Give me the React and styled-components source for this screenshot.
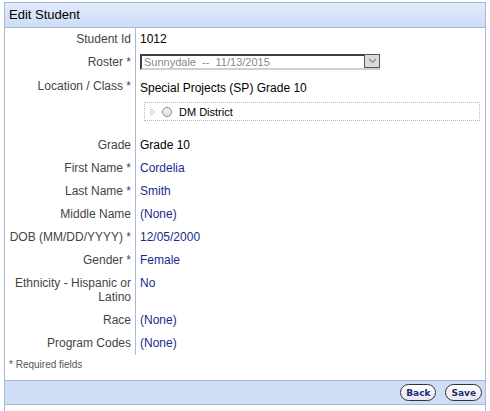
import React from "react";
import styled, { createGlobalStyle } from "styled-components";

const GlobalStyle = createGlobalStyle`
  html, body {
    margin: 0;
    padding: 0;
    background: #fff;
  }
  body {
    font-family: Arial, "Liberation Sans", sans-serif;
    font-size: 12px;
  }
`;

const fields = [
  { label: "Grade", value: "Grade 10", plain: true },
  { label: "First Name *", value: "Cordelia" },
  { label: "Last Name *", value: "Smith" },
  { label: "Middle Name", value: "(None)" },
  { label: "DOB (MM/DD/YYYY) *", value: "12/05/2000" },
  { label: "Gender *", value: "Female" },
  { label: "Ethnicity - Hispanic or Latino", value: "No" },
  { label: "Race", value: "(None)" },
  { label: "Program Codes", value: "(None)" },
];

export default function App() {
  return (
    <>
      <GlobalStyle />
      <Panel>
        <Header>Edit Student</Header>
        <Body>
          <Form>
            <Label>Student Id</Label>
            <Value plain>1012</Value>

            <Label>Roster *</Label>
            <Value>
              <Select>
                <SelectText>Sunnydale &nbsp;-- &nbsp;11/13/2015</SelectText>
                <SelectArrow>
                  <svg width="9" height="6" viewBox="0 0 9 6">
                    <path d="M1 1 L4.5 4.5 L8 1" fill="none" stroke="#8a8a8a" strokeWidth="1.2" />
                  </svg>
                </SelectArrow>
              </Select>
            </Value>

            <Label>Location / Class *</Label>
            <Value plain>
              <ClassName>Special Projects (SP) Grade 10</ClassName>
              <TreeBox>
                <svg width="6" height="8" viewBox="0 0 6 8">
                  <path d="M1 1 L5 4 L1 7 Z" fill="none" stroke="#c8c8c8" strokeWidth="1" />
                </svg>
                <Radio />
                <TreeText>DM District</TreeText>
              </TreeBox>
            </Value>

            {fields.map((f) => (
              <React.Fragment key={f.label}>
                <Label>{f.label}</Label>
                <Value plain={f.plain}>{f.value}</Value>
              </React.Fragment>
            ))}
          </Form>
          <Required>* Required fields</Required>
        </Body>
        <Footer>
          <PillButton>Back</PillButton>
          <PillButton>Save</PillButton>
        </Footer>
        <Spacer />
      </Panel>
    </>
  );
}

const Panel = styled.div`
  margin: 2px 4px 0;
  border: 1px solid #a9b8d6;
  border-bottom: none;
`;

const Header = styled.div`
  height: 24px;
  line-height: 24px;
  padding-left: 4px;
  font-size: 13px;
  color: #000;
  background: linear-gradient(#e2ebfb, #cedcf6);
  border-bottom: 1px solid #a9b8d6;
`;

const Body = styled.div`
  background: #fff;
`;

const Form = styled.div`
  display: grid;
  grid-template-columns: 131px 1fr;
`;

const Label = styled.div`
  padding: 4px 4px 5px 0;
  line-height: 14px;
  text-align: right;
  color: #444;
  border-right: 1px solid #a9b8d6;
`;

const Value = styled.div`
  padding: 4px 4px 5px 4px;
  line-height: 14px;
  color: ${(p) => (p.plain ? "#000" : "#1a2a8c")};
`;

const Select = styled.div`
  display: flex;
  align-items: stretch;
  width: 240px;
  height: 16px;
  margin-top: -1px;
  box-sizing: border-box;
  border-top: 2px solid #404040;
  border-left: 2px solid #404040;
  border-right: 1px solid #d4d0c8;
  border-bottom: 2px solid #d4d0c8;
  background: #fff;
`;

const SelectText = styled.div`
  flex: 1;
  padding-left: 2px;
  font-size: 11px;
  line-height: 12px;
  color: #8a8a8a;
  white-space: nowrap;
`;

const SelectArrow = styled.div`
  width: 14px;
  display: flex;
  align-items: center;
  justify-content: center;
  background: #dcdad4;
  border: 1px solid #555;
  margin-top: -2px;
  margin-right: -1px;
`;

const ClassName = styled.div`
  padding-top: 2px;
`;

const TreeBox = styled.div`
  display: flex;
  align-items: center;
  gap: 6px;
  height: 17px;
  margin: 7px 1px 8px 4px;
  padding-left: 5px;
  border: 1px dotted #b8b8b8;
`;

const Radio = styled.span`
  width: 8px;
  height: 8px;
  border-radius: 50%;
  border: 1px solid #8a8a8a;
  background: linear-gradient(#f4f4f4, #e0e0e0);
`;

const TreeText = styled.span`
  font-size: 11px;
  color: #000;
  margin-left: 1px;
`;

const Required = styled.div`
  padding: 4px 4px 10px;
  font-size: 10px;
  color: #555;
`;

const Footer = styled.div`
  display: flex;
  justify-content: flex-end;
  align-items: center;
  gap: 9px;
  height: 23px;
  padding-right: 3px;
  background: #d0ddf6;
  border-top: 1px solid #a9b8d6;
  border-bottom: 1px solid #a9b8d6;
`;

const PillButton = styled.button`
  height: 17px;
  padding: 0 5px;
  border: 1px solid #333;
  border-radius: 9px;
  background: linear-gradient(#ffffff, #e6e8f2);
  font-family: "DejaVu Sans", Verdana, sans-serif;
  font-size: 9px;
  font-weight: bold;
  color: #1c2e72;
  line-height: 14px;
  cursor: pointer;
`;

const Spacer = styled.div`
  height: 20px;
`;
